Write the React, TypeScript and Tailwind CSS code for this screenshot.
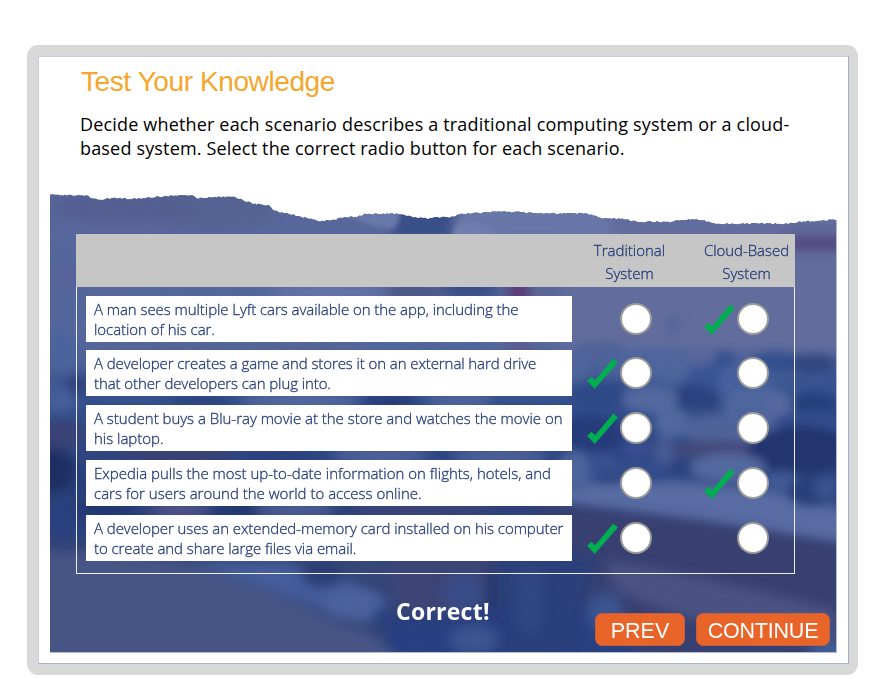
import React from "react";

type Answer = "traditional" | "cloud";

const scenarios: { lines: [string, string]; answer: Answer; spacing: string; tracking: string }[] = [
  { lines: ["A man sees multiple Lyft cars available on the app, including the", "location of his car."], answer: "cloud", spacing: "mt-[9px]", tracking: "tracking-[-0.06px]" },
  { lines: ["A developer creates a game and stores it on an external hard drive", "that other developers can plug into."], answer: "traditional", spacing: "mt-[8px]", tracking: "tracking-[-0.09px]" },
  { lines: ["A student buys a Blu-ray movie at the store and watches the movie on", "his laptop."], answer: "traditional", spacing: "mt-[9px]", tracking: "tracking-[-0.02px]" },
  { lines: ["Expedia pulls the most up-to-date information on flights, hotels, and", "cars for users around the world to access online."], answer: "cloud", spacing: "mt-[9px]", tracking: "tracking-normal" },
  { lines: ["A developer uses an extended-memory card installed on his computer", "to create and share large files via email."], answer: "traditional", spacing: "mt-[9px]", tracking: "tracking-[-0.06px]" },
];

const edge: [number, number][] = [
  [50, 194], [60, 195], [87, 195.5], [91, 198], [100, 199.5], [115, 198], [130, 199], [155, 197], [170, 196], [180, 195], [192, 195], [197, 198.5],
  [215, 197], [235, 197], [245, 201], [255, 204], [268, 205], [275, 211], [295, 215], [310, 218.5], [320, 221], [337, 219], [345, 217],
  [358, 217], [365, 214], [395, 213.5], [402, 215], [415, 217.5], [425, 218.5], [440, 217.5], [452, 217], [460, 214], [480, 213], [500, 211.5], [540, 213],
  [583, 213.5], [590, 214.5], [600, 218], [625, 219], [635, 221.5], [670, 222], [682, 220], [695, 219.5], [705, 221], [715, 223.5],
  [735, 224], [760, 223], [782, 224], [800, 222], [815, 221], [837, 220],
];

function tornPath() {
  const pts: string[] = [];
  let seed = 7;
  for (let i = 0; i < edge.length - 1; i++) {
    const [x0, y0] = edge[i];
    const [x1, y1] = edge[i + 1];
    for (let x = x0; x < x1; x += 1.7) {
      seed = (seed * 16807) % 2147483647;
      const jitter = ((seed % 1000) / 1000 - 0.5) * 1.5;
      pts.push(`${x.toFixed(1)} ${(y0 + ((y1 - y0) * (x - x0)) / (x1 - x0) + jitter).toFixed(1)}`);
    }
  }
  return `M50 653 L${pts.join(" L")} L837 220 L837 653 Z`;
}

const blobs: [number, number, number, number, string, number][] = [
  // x, y, rx, ry, colour, opacity
  [120, 208, 70, 14, "#4d5887", 0.5],
  [160, 228, 80, 8, "#5c659b", 0.7],
  [215, 210, 60, 22, "#525f8d", 0.6],
  [62, 285, 30, 45, "#53669c", 1],
  [68, 275, 9, 12, "#625f99", 0.6],
  [62, 350, 20, 20, "#4c639c", 1],
  [77, 387, 12, 12, "#2e417c", 1],
  [60, 400, 18, 12, "#465e9b", 1],
  [60, 435, 25, 15, "#3b4376", 1],
  [52, 470, 24, 22, "#1d2d64", 1],
  [70, 520, 30, 18, "#2a4180", 0.9],
  [225, 292, 130, 8, "#53669a", 1],
  [330, 292, 60, 8, "#6474a8", 1],
  [415, 292, 30, 9, "#4c5786", 1],
  [470, 290, 30, 9, "#354c85", 1],
  [519, 292, 11, 16, "#5c3a77", 1],
  [546, 292, 12, 8, "#5e6594", 0.9],
  [240, 346, 160, 7, "#526498", 1],
  [430, 346, 70, 7, "#4d659f", 1],
  [520, 346, 12, 9, "#61568f", 0.9],
  [200, 401, 30, 7, "#2c427d", 1],
  [300, 401, 60, 8, "#586aa0", 1],
  [390, 401, 28, 8, "#263b78", 1],
  [460, 401, 34, 8, "#52659c", 1],
  [120, 456, 40, 7, "#30447e", 1],
  [175, 456, 60, 6, "#3d3f70", 1],
  [280, 456, 35, 7, "#2a407d", 1],
  [380, 456, 50, 8, "#53659c", 1],
  [500, 456, 50, 8, "#50639a", 1],
  [105, 510, 30, 8, "#20366f", 1],
  [180, 510, 30, 8, "#51548a", 1],
  [240, 510, 30, 8, "#24396f", 1],
  [295, 510, 40, 8, "#505f96", 1],
  [420, 510, 70, 8, "#3c4578", 1],
];

// Out-of-focus shapes on the right half, drawn back to front.
const crowd: [number, number, number, number, string, number][] = [
  [673, 324, 8, 12, "#53659a", 0.7],
  [600, 348, 25, 6, "#475e96", 0.7],
  [655, 362, 55, 14, "#4f659c", 0.9],
  [715, 358, 22, 8, "#2f4d8c", 0.8],
  [577, 365, 12, 16, "#50659c", 0.9],
  [612, 368, 14, 8, "#4a629c", 0.7],
  [720, 378, 48, 14, "#3a5593", 1],
  [775, 362, 24, 10, "#30508e", 1],
  [602, 396, 34, 14, "#2f4886", 1],
  [694, 402, 24, 18, "#2b427e", 1],
  [700, 418, 44, 8, "#3f568f", 0.8],
  [674, 371, 16, 13, "#4f659c", 0.9],
  [702, 354, 14, 12, "#5f6a9d", 0.8],
  [745, 382, 26, 22, "#4a639d", 0.8],
  [650, 399, 28, 14, "#52679f", 1],
  [758, 405, 36, 18, "#52679f", 0.9],
  [778, 407, 14, 14, "#5a6ba0", 0.6],
  [813, 364, 24, 9, "#32457f", 1],
  [820, 383, 30, 12, "#38528f", 1],
  [815, 403, 24, 11, "#28407b", 1],
  [815, 422, 42, 11, "#314c8a", 1],
  [590, 435, 34, 20, "#253b7a", 1],
  [637, 447, 14, 10, "#3a4d91", 1],
  [730, 430, 50, 15, "#50649b", 1],
  [671, 422, 17, 16, "#5469a0", 0.9],
  [715, 450, 46, 10, "#45497c", 1],
  [664, 452, 10, 16, "#4d5f97", 0.8],
  [800, 450, 52, 24, "#24366e", 1],
  [728, 468, 38, 15, "#53679f", 1],
  [575, 470, 18, 20, "#4e639b", 1],
  [602, 464, 16, 13, "#3b528e", 0.8],
  [642, 470, 28, 10, "#354e8c", 1],
  [608, 478, 12, 5, "#2c4583", 0.8],
  [783, 482, 18, 11, "#425c98", 0.9],
  [810, 491, 22, 15, "#2a3f7c", 1],
  [826, 488, 12, 12, "#3f5894", 0.8],
];

const streaks: [string, string, number][] = [
  ["M560 484 Q650 472 780 490 L850 510 L850 546 Q700 528 560 504Z", "#586ca3", 1],
  ["M540 505 Q700 515 850 548 L850 670 L540 670Z", "#373f71", 1],
  ["M30 552 Q180 550 260 585 L450 670 L30 670Z", "#475485", 1],
  ["M190 563 L280 562 Q350 580 390 600 L370 624 Q280 595 190 563Z", "#4660a0", 0.9],
  ["M370 612 L590 600 L650 670 L415 670Z", "#2a417f", 1],
  ["M390 555 L500 555 L465 612 L400 610Z", "#3c4477", 1],
  ["M500 540 L600 560 L560 670 L500 670Z", "#293f7b", 0.9],
  ["M604 560 Q700 575 837 610 L837 646 Q700 630 615 590Z", "#4c5486", 0.9],
];

function Backdrop() {
  return (
    <svg className="absolute inset-0 h-full w-full" viewBox="50 190 787 463" preserveAspectRatio="none" aria-hidden="true">
      <defs>
        <linearGradient id="base" x1="0" x2="0" y1="0" y2="1">
          <stop offset="0" stopColor="#58679b" />
          <stop offset="0.33" stopColor="#58689b" />
          <stop offset="0.46" stopColor="#33508d" />
          <stop offset="0.65" stopColor="#2a407b" />
          <stop offset="0.8" stopColor="#374679" />
          <stop offset="1" stopColor="#334576" />
        </linearGradient>
        <clipPath id="torn"><path d={tornPath()} /></clipPath>
        <filter id="soft" x="-10%" y="-10%" width="120%" height="120%"><feGaussianBlur stdDeviation="6" /></filter>
        <filter id="crowd" x="-10%" y="-10%" width="120%" height="120%"><feGaussianBlur stdDeviation="4.6" /></filter>
        <filter id="fine" x="-50%" y="-50%" width="200%" height="200%"><feGaussianBlur stdDeviation="2" /></filter>
        <filter id="wide" x="-20%" y="-20%" width="140%" height="140%"><feGaussianBlur stdDeviation="6" /></filter>
      </defs>
      <g clipPath="url(#torn)">
        <rect x="50" y="190" width="787" height="463" fill="url(#base)" />
        <rect x="560" y="170" width="310" height="181" fill="#626d9d" filter="url(#wide)" />
        {streaks.map(([d, fill, opacity]) => (
          <path key={d} d={d} fill={fill} opacity={opacity} filter="url(#wide)" />
        ))}
        <g filter="url(#soft)">
          {blobs.map(([cx, cy, rx, ry, fill, opacity], i) => (
            <ellipse key={i} cx={cx} cy={cy} rx={rx} ry={ry} fill={fill} opacity={opacity} />
          ))}
          <path d="M398 205 H460 L450 240 H390Z" fill="#395087" />
          <path d="M455 205 H595 L620 240 H455Z" fill="#6877a8" />
          <path d="M785 238 H860 V248 H785Z" fill="#4b3b75" />
          <ellipse cx="350" cy="604" rx="26" ry="13" fill="#4d629b" />
          <ellipse cx="322" cy="574" rx="20" ry="13" fill="#2a3c74" />
          <ellipse cx="605" cy="612" rx="18" ry="20" fill="#3a5590" />
          <ellipse cx="530" cy="600" rx="14" ry="36" fill="#304783" />
          <ellipse cx="493" cy="590" rx="4" ry="24" fill="#1d3068" />
          <ellipse cx="463" cy="593" rx="20" ry="20" fill="#36508d" opacity="0.7" />
          <ellipse cx="474" cy="640" rx="24" ry="15" fill="#3d5490" />
          <ellipse cx="415" cy="642" rx="30" ry="12" fill="#264084" />
          <ellipse cx="832" cy="651" rx="24" ry="8" fill="#41629f" />
        </g>
        <g filter="url(#crowd)">
          {crowd.map(([cx, cy, rx, ry, fill, opacity], i) => (
            <ellipse key={i} cx={cx} cy={cy} rx={rx} ry={ry} fill={fill} opacity={opacity} />
          ))}
        </g>
        <g filter="url(#fine)">
          <path d="M345 214 L365 208 H400 Q400 230 388 229 Q370 227 345 214Z" fill="#6978aa" />
          <path d="M453 238 Q452 222 468 222 Q491 225 503 238Z" fill="#707dae" />
        </g>
        <path d="M836.5 220V653 M50 652.5H837" stroke="#b4bad3" strokeWidth="1" fill="none" />
      </g>
    </svg>
  );
}

function Check() {
  return (
    <svg className="absolute -left-[33px] top-[1px] h-[31px] w-[31px]" viewBox="0 0 31 31" aria-hidden="true">
      <path d="M0 22.7 L4.5 18.7 L8 22.2 L26.3 0.6 L30.8 4.6 L7.7 31Z" fill="#00ad50" />
    </svg>
  );
}

function Choice({ correct, label }: { correct: boolean; label: string }) {
  return (
    <div className="relative h-8 w-8">
      {correct && <Check />}
      <button aria-label={label} className="block h-8 w-8 rounded-full border-2 border-[#9b9b99] bg-white" />
    </div>
  );
}

function NavButton({ children, size }: { children: string; size: string }) {
  return (
    <button className={`h-[33px] rounded-[7px] border border-[#c06045] bg-[#e96428] pt-[2px] font-['Liberation_Sans',Arial,sans-serif] leading-[30px] text-white ${size}`}>
      {children}
    </button>
  );
}

export default function App() {
  return (
    <div className="h-[679px] w-[880px] bg-white pl-[27px] pt-[45px] font-['Open_Sans',sans-serif]">
      <main className="h-[630px] w-[831px] rounded-[11px] bg-[#d9d9d9] pl-[11px] pt-[11px]">
        <div className="flex h-[608px] w-[811px] flex-col border border-[#c9cbe0] border-b-[#a9b0ca] border-r-[#a3acca] bg-white pl-[11px]">
          <header className="h-[133px] pl-[31px]">
            <h1 className="pt-[8px] font-['Liberation_Sans',Arial,sans-serif] text-[28px] leading-[34px] tracking-[-0.4px] text-[#f5a62b]">Test Your Knowledge</h1>
            <p className="-ml-px mt-[13px] whitespace-nowrap text-[18px] leading-6 tracking-[0.17px] text-black">
              Decide whether each scenario describes a traditional computing system or a cloud-
              <br />
              based system. Select the correct radio button for each scenario.
            </p>
          </header>
          <section className="relative h-[463px] w-[787px]">
            <Backdrop />
            <div className="relative flex h-full flex-col pl-[26px] pt-[44px]">
              <div className="h-[340px] w-[719px] border border-[#edf0f6]">
                <div className="-mx-px -mt-px flex h-[53px] bg-[#c6c6c6] pl-[495px] pt-[5px] text-center text-[15px] font-light leading-[23px] text-[#223a78] [-webkit-text-stroke:0.3px_#223a78]">
                  <div className="w-[117px] shrink-0">Traditional<br />System</div>
                  <div className="w-[117px] shrink-0 whitespace-nowrap tracking-[-0.05px]">Cloud-Based<br />System</div>
                </div>
                {scenarios.map((s) => (
                  <div key={s.lines[0]} className={`flex h-[46px] pl-[9px] ${s.spacing}`}>
                    <p className={`w-[486px] whitespace-nowrap bg-white pl-2 pt-[3px] text-[15px] font-light leading-5 text-[#223a78] [-webkit-text-stroke:0.3px_#223a78] ${s.tracking}`}>
                      {s.lines[0]}
                      <br />
                      {s.lines[1]}
                    </p>
                    <div className="flex gap-[85px] pl-[48px] pt-[7px]">
                      <Choice correct={s.answer === "traditional"} label="Traditional System" />
                      <Choice correct={s.answer === "cloud"} label="Cloud-Based System" />
                    </div>
                  </div>
                ))}
              </div>
              <div className="flex pt-[21px]">
                <p className="w-[519px] pl-[320px] text-[23px] font-bold leading-[32px] tracking-[0.25px] text-white">Correct!</p>
                <div className="flex gap-[11px] pt-[18px]">
                  <NavButton size="w-[90px] text-[21.5px]">PREV</NavButton>
                  <NavButton size="w-[134px] text-[21.5px] tracking-[-0.2px]">CONTINUE</NavButton>
                </div>
              </div>
            </div>
          </section>
        </div>
      </main>
    </div>
  );
}
